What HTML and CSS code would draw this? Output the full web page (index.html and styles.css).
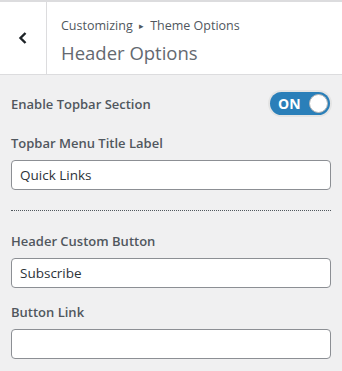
FILE: index.html
```html
<!DOCTYPE html>
<html lang="en">
<head>
  <meta charset="UTF-8">
  <title>Header Options</title>
  <link rel="stylesheet" href="styles.css">
</head>
<body>

<div class="panel-head">
  <button class="back" aria-label="Back">
    <svg width="10" height="14" viewBox="0 0 10 14">
      <path d="M7.5 2 L2.5 7 L7.5 12" fill="none" stroke="#1d2327" stroke-width="2.4"/>
    </svg>
  </button>
  <div class="titles">
    <div class="crumb">Customizing <span class="sep">&#9656;</span> Theme Options</div>
    <h2>Header Options</h2>
  </div>
</div>

<div class="controls">
  <div class="row toggle-row">
    <label>Enable Topbar Section</label>
    <div class="toggle">
      <span class="on">ON</span>
      <span class="knob"></span>
    </div>
  </div>

  <div class="field">
    <label>Topbar Menu Title Label</label>
    <input type="text" value="Quick Links">
  </div>

  <hr class="divider">

  <div class="field">
    <label>Header Custom Button</label>
    <input type="text" value="Subscribe">
  </div>

  <div class="field">
    <label>Button Link</label>
    <input type="text" value="">
  </div>
</div>

</body>
</html>
```

FILE: styles.css
```css
body {
  margin: 0;
  background: #f0f0f1;
  font-family: "Open Sans", "Noto Sans", sans-serif;
  color: #50575e;
}
.panel-head {
  display: flex;
  height: 72px;
  background: #fff;
  border-top: 2px solid #dcdcde;
  border-bottom: 1px solid #dcdcde;
}
.back {
  width: 47px;
  border: 0;
  border-right: 1px solid #dcdcde;
  background: #fff;
  padding: 0;
  display: flex;
  align-items: center;
  justify-content: center;
}
.titles { padding: 14px 0 0 14px; }
.crumb {
  font-size: 12.5px;
  line-height: 20px;
  color: #50575e;
}
.crumb .sep { font-size: 9px; vertical-align: 1px; margin: 0 3px; }
h2 {
  margin: 4px 0 0;
  font-size: 18.5px;
  font-weight: 400;
  line-height: 26px;
  color: #646970;
}
.controls { padding: 17px 11px 0; }
label {
  display: block;
  font-size: 13px;
  font-weight: 600;
  line-height: 20px;
}
.toggle-row {
  display: flex;
  align-items: center;
  justify-content: space-between;
  margin-bottom: 18px;
}
.toggle {
  width: 60px;
  height: 23px;
  box-sizing: border-box;
  background: #2a7fb9;
  border-radius: 12px;
  box-shadow: 0 0 0 2px #e4e4e4;
  margin-right: 1px;
  display: flex;
  align-items: center;
  justify-content: space-between;
  padding: 0 2px 0 8px;
}
.toggle .on {
  color: #fff;
  font-weight: 700;
  font-size: 14px;
}
.knob {
  width: 19px;
  height: 19px;
  box-sizing: border-box;
  border-radius: 50%;
  background: #fff;
  border: 1px solid #b8b8b8;
}
.field label { margin-bottom: 7px; }
.field { margin-bottom: 14px; }
input[type=text] {
  display: block;
  width: 100%;
  box-sizing: border-box;
  height: 30px;
  border: 1px solid #8c8f94;
  border-radius: 4px;
  padding: 0 8px;
  font-family: inherit;
  font-size: 13.5px;
  color: #2c3338;
  background: #fff;
}
.divider {
  border: 0;
  border-top: 1px dotted #50575e;
  margin: 20px 0;
}
```
